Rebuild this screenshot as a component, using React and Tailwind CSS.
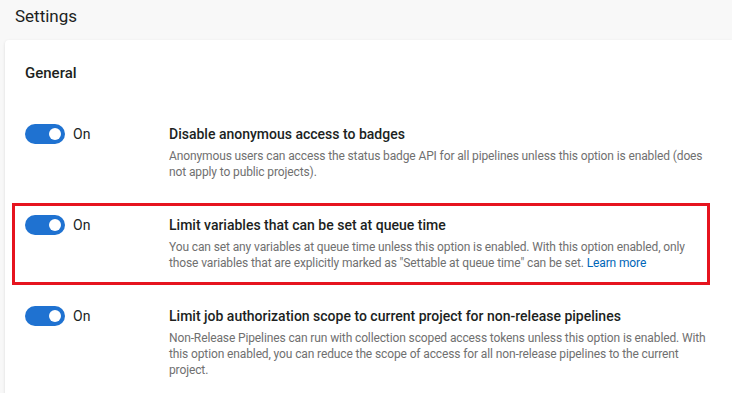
import React from "react";

function Toggle() {
  return (
    <div className="flex items-center gap-2 w-[144px] shrink-0 h-5">
      <div className="w-10 h-5 rounded-full bg-[#1f72d1] flex items-center justify-end pr-[4px]">
        <div className="w-3 h-3 rounded-full bg-white" />
      </div>
      <span className="text-[14px] leading-5 text-[#201f1e]">On</span>
    </div>
  );
}

function Row({ title, children, highlight }) {
  return (
    <div
      className={
        "flex w-[698px] border-[3px] pl-[10px] pt-[9px] pb-[11px] " +
        (highlight ? "border-[#e6141f]" : "border-transparent")
      }
    >
      <Toggle />
      <div className="w-[544px] shrink-0">
        <div className="text-[14px] leading-5 font-medium text-[#201f1e]">{title}</div>
        <div className="mt-1 text-[12px] leading-4 tracking-[-0.12px] text-[#707070]">{children}</div>
      </div>
    </div>
  );
}

export default function App() {
  return (
    <div
      className="w-[732px] h-[393px] overflow-hidden bg-[#f8f8f8]"
      style={{ fontFamily: 'Roboto, "Open Sans", sans-serif' }}
    >
      <div className="h-10 pl-[15px] pt-[5px] text-[17px] leading-[22px] text-[#201f1e]">Settings</div>
      <div className="ml-[5px] bg-white rounded-l shadow-[0_1px_3px_rgba(0,0,0,0.12)] h-[400px] pl-[7px] pt-[22px]">
        <div className="pl-[13px] text-[15px] leading-[22px] font-medium text-[#201f1e]">General</div>
        <div className="mt-[28px] flex flex-col gap-[9px]">
          <Row title="Disable anonymous access to badges">
            Anonymous users can access the status badge API for all pipelines unless this option is enabled (does not apply to public projects).
          </Row>
          <Row title="Limit variables that can be set at queue time" highlight>
            You can set any variables at queue time unless this option is enabled. With this option enabled, only those variables that are explicitly marked as "Settable at queue time" can be set.{" "}
            <span className="text-[#0066b8]">Learn more</span>
          </Row>
          <Row title="Limit job authorization scope to current project for non-release pipelines">
            Non-Release Pipelines can run with collection scoped access tokens unless this option is enabled. With this option enabled, you can reduce the scope of access for all non-release pipelines to the current project.
          </Row>
        </div>
      </div>
    </div>
  );
}
